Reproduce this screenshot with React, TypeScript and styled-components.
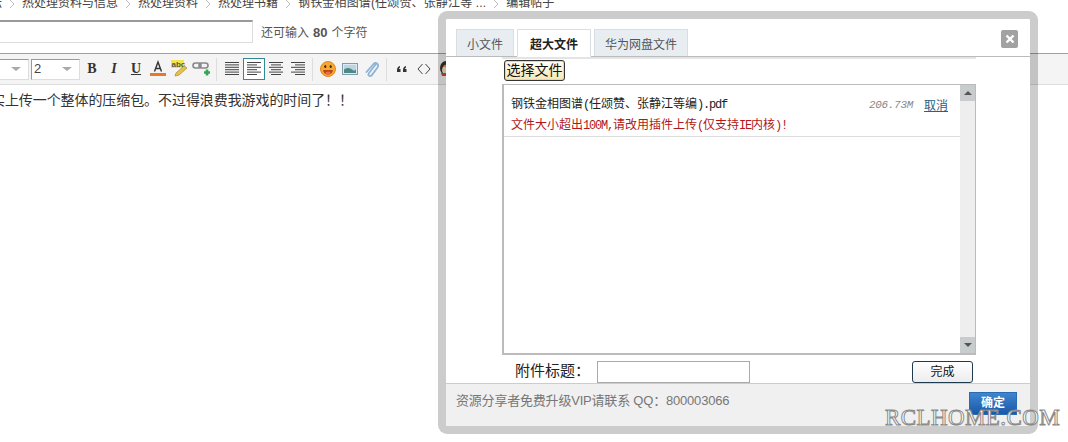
import styled, { createGlobalStyle } from "styled-components";

const cjk = `"Liberation Sans", "Noto Sans CJK SC", sans-serif`;

const GlobalStyle = createGlobalStyle`
  html, body {
    margin: 0;
    padding: 0;
    background: #fff;
    overflow: hidden;
  }
  body {
    height: 442px;
    font-family: ${cjk};
    font-size: 12px;
    color: #333;
  }
`;

const Page = styled.div`
  position: relative;
  width: 1068px;
  height: 442px;
  overflow: hidden;
`;

const Crumbs = styled.div`
  display: flex;
  align-items: flex-end;
  height: 11px;
  overflow: hidden;
  margin-left: -22px;
  gap: 7px;
  line-height: 16px;
  white-space: nowrap;
  color: #444;
`;

const Crumb = styled.span<{ $spaced?: boolean }>`
  display: block;
  flex: none;
  height: 16px;
  letter-spacing: ${(p) => (p.$spaced ? "0.15px" : "0")};
`;

const TitleRow = styled.div`
  display: flex;
  align-items: center;
  margin-top: 9px;
  height: 23px;
  gap: 8px;
`;

const TitleInput = styled.div`
  width: 253px;
  height: 23px;
  box-sizing: border-box;
  border: 1px solid #ddd;
  border-top: 2px solid #999;
  border-left: 0;
`;

const Hint = styled.span`
  color: #555;
  line-height: 23px;
  padding-top: 2px;
  b {
    font-size: 13px;
    margin: 0 4px;
  }
`;

const Toolbar = styled.div`
  display: flex;
  align-items: center;
  margin-top: 10px;
  height: 30px;
  background: #f4f4f4;
  border-top: 1px solid #a0a0a0;
  border-bottom: 1px solid #ddd;
`;

const Select = styled.div<{ $w: number; $flush?: boolean; $gap: number }>`
  width: ${(p) => p.$w}px;
  height: 21px;
  box-sizing: border-box;
  background: #fff;
  border: 1px solid #ddd;
  border-top-color: #999;
  border-left: ${(p) => (p.$flush ? "0" : "1px solid #999")};
  margin-right: ${(p) => p.$gap}px;
  font-size: 13px;
  line-height: 18px;
  padding: 0 7px 0 2px;
  color: #444;
  display: flex;
  align-items: center;
  justify-content: space-between;
`;

const Caret = styled.i`
  width: 0;
  height: 0;
  border-left: 5px solid transparent;
  border-right: 5px solid transparent;
  border-top: 4px solid #aaa;
`;

const ToolBtn = styled.div<{ $on?: boolean }>`
  width: 22px;
  height: 22px;
  flex: none;
  box-sizing: border-box;
  display: flex;
  align-items: center;
  justify-content: center;
  border: 1px solid ${(p) => (p.$on ? "#2f8a96" : "transparent")};
  background: ${(p) => (p.$on ? "#fff" : "transparent")};
  color: #333;
`;

const LetterBtn = styled(ToolBtn)<{ $italic?: boolean; $under?: boolean }>`
  font-family: "Liberation Serif", serif;
  font-size: 14px;
  font-weight: 700;
  font-style: ${(p) => (p.$italic ? "italic" : "normal")};
  text-decoration: ${(p) => (p.$under ? "underline" : "none")};
`;

const Sep = styled.div`
  width: 1px;
  height: 23px;
  background: #ddd;
  margin: 0 4px 0 3px;
  flex: none;
`;

const Editor = styled.div`
  margin-left: -9px;
  padding-top: 5px;
  font-size: 14px;
  line-height: 20px;
  letter-spacing: -0.08px;
  color: #333;
  white-space: nowrap;
`;

const Modal = styled.div`
  position: absolute;
  left: 438px;
  top: 11px;
  width: 600px;
  height: 423px;
  box-sizing: border-box;
  border: 8px solid rgba(0, 0, 0, 0.2);
  border-radius: 9px;
  background: #fff;
  background-clip: padding-box;
  display: flex;
  flex-direction: column;
`;

const TabBar = styled.div`
  display: flex;
  gap: 3px;
  align-items: flex-end;
  height: 38px;
  box-sizing: border-box;
  padding-left: 10px;
  border-bottom: 1px solid #bbb;
  position: relative;
`;

const Tab = styled.div<{ $on?: boolean }>`
  box-sizing: border-box;
  padding: 0 ${(p) => (p.$on ? "12px" : "10px")};
  display: flex;
  align-items: center;
  color: ${(p) => (p.$on ? "#222" : "#555")};
  font-weight: ${(p) => (p.$on ? 700 : 400)};
  background: ${(p) => (p.$on ? "#fff" : "#e8edf2")};
  border: 1px solid #d8dee4;
  border-bottom: ${(p) => (p.$on ? "1px solid #fff" : "0")};
  margin-bottom: ${(p) => (p.$on ? "-1px" : "0")};
  height: ${(p) => (p.$on ? "28px" : "27px")};
`;

const CloseBtn = styled.div`
  position: absolute;
  right: 12px;
  top: 11px;
  width: 17px;
  height: 18px;
  border-radius: 2px;
  background: #a2a2a2;
  display: flex;
  align-items: center;
  justify-content: center;
`;

const Body = styled.div`
  flex: 1;
  display: flex;
  flex-direction: column;
  padding-left: 56px;
  padding-right: 54px;
`;

const BodyTopRule = styled.div`
  height: 2px;
  background: #e4e4e4;
`;

const PickRow = styled.div`
  display: flex;
  padding: 1px 0 0 2px;
  height: 25px;
  box-sizing: border-box;
`;

const PickButton = styled.div`
  width: 61px;
  height: 21px;
  box-sizing: border-box;
  border: 1px solid #333;
  border-radius: 3px;
  background: linear-gradient(#fffdf5, #f6e6b8);
  box-shadow: inset 0 0 0 1px #f3d68e;
  font-size: 14px;
  line-height: 18px;
  text-align: center;
  color: #111;
`;

const ListBox = styled.div`
  display: flex;
  height: 271px;
  box-sizing: border-box;
  border: 1px solid #bbb;
  border-width: 1px 1px 2px 2px;
`;

const ListInner = styled.div`
  flex: 1;
  min-width: 0;
`;

const FileRow = styled.div`
  height: 52px;
  box-sizing: border-box;
  border-bottom: 1px solid #ddd;
  padding: 9px 0 0 7px;
  display: grid;
  grid-template-columns: 1fr auto auto;
  grid-template-rows: 21px 20px;
  align-items: center;
`;

const FileName = styled.span`
  color: #222;
  line-height: 20px;
`;

const Half = styled.span`
  font-family: "Liberation Mono", monospace;
  letter-spacing: -1.2px;
`;

const FileSize = styled.span`
  font-style: italic;
  font-size: 11px;
  color: #888;
  margin-right: 11px;
  font-family: "Liberation Mono", monospace;
  letter-spacing: -0.3px;
`;

const CancelLink = styled.a`
  color: #2a6080;
  text-decoration: underline;
  margin-right: 12px;
`;

const FileError = styled.span`
  grid-column: 1 / 4;
  color: #b01818;
  line-height: 20px;
`;

const Scrollbar = styled.div`
  width: 15px;
  flex: none;
  background: #eee;
  display: flex;
  flex-direction: column;
  justify-content: space-between;
`;

const ScrollArrow = styled.div<{ $down?: boolean }>`
  height: 16px;
  background: #c8cccc;
  display: flex;
  align-items: center;
  justify-content: center;
  &::after {
    content: "";
    border-left: 4px solid transparent;
    border-right: 4px solid transparent;
    ${(p) => (p.$down ? "border-top: 4px solid #555;" : "border-bottom: 4px solid #555;")}
  }
`;

const TitleField = styled.div`
  display: flex;
  align-items: center;
  height: 28px;
  padding: 6px 3px 0 13px;
  box-sizing: border-box;
`;

const FieldLabel = styled.label`
  font-size: 15px;
  line-height: 20px;
  padding-bottom: 3px;
  color: #222;
  width: 82px;
  flex: none;
`;

const FieldInput = styled.div`
  width: 153px;
  height: 22px;
  box-sizing: border-box;
  border: 1px solid #aaa;
`;

const DoneButton = styled.div`
  margin-left: auto;
  width: 61px;
  height: 22px;
  box-sizing: border-box;
  border: 1px solid #1e3a4e;
  border-radius: 3px;
  background: linear-gradient(#fff, #ececec);
  text-align: center;
  line-height: 20px;
  color: #111;
`;

const Footer = styled.div`
  height: 43px;
  box-sizing: border-box;
  background: #f0f0f0;
  border-top: 1px solid #ccc;
  padding: 8px 13px 0 10px;
  display: flex;
  justify-content: space-between;
  align-items: flex-start;
  color: #777;
  font-size: 13px;
  letter-spacing: -0.2px;
  line-height: 18px;
`;

const ConfirmButton = styled.div`
  width: 48px;
  height: 23px;
  background: linear-gradient(#3f86d0, #1a58a8);
  border: 1px solid #2a6cb4;
  box-sizing: border-box;
  color: #fff;
  font-size: 12px;
  font-weight: 700;
  letter-spacing: 0;
  text-align: center;
  line-height: 21px;
`;

const Watermark = styled.div`
  position: absolute;
  left: 885px;
  top: 406px;
  font-family: "Liberation Serif", serif;
  font-size: 23px;
  line-height: 24px;
  letter-spacing: 0.4px;
  color: #fff;
  -webkit-text-stroke: 1px #8a8a8a;
  white-space: nowrap;
`;

const Chevron = () => (
  <svg width="6" height="11" viewBox="0 0 6 11" fill="none" style={{ flex: "none" }}>
    <path d="M1 0l4 4-4 4" stroke="#bbb" />
  </svg>
);

const AlignIcon = ({ mode }: { mode: "j" | "l" | "c" | "r" }) => {
  const rows = [0, 1, 2, 3, 4, 5];
  const line = (i: number) => {
    const short = i % 2 === 1 ? 10 : 14;
    if (mode === "j") return [0, 14];
    if (mode === "l") return [0, short];
    if (mode === "c") return [(14 - short) / 2, short];
    return [14 - short, short];
  };
  return (
    <svg width="14" height="14" viewBox="0 0 14 14">
      {rows.map((i) => {
        const [x, w] = line(i);
        return <rect key={i} x={x} y={i * 2.4} width={w} height="1" fill="#444" />;
      })}
    </svg>
  );
};

const ColorIcon = () => (
  <svg width="18" height="18" viewBox="0 0 18 18">
    <path d="M5.500 11.500L9 2l3.500 9.500M6.800 8.500h4.400" fill="none" stroke="#333" strokeWidth="1.4" />
    <rect x="1" y="13" width="16" height="3" fill="#e8792a" />
  </svg>
);

const SpellIcon = () => (
  <svg width="18" height="18" viewBox="0 0 18 18">
    <rect x="0" y="0" width="13" height="8" fill="#f4e64a" />
    <text x="0.5" y="6.5" fontSize="8" fontWeight="700" fill="#555" fontFamily="Liberation Sans">abc</text>
    <path d="M4 16l1-3 8-7 3 2-8 7z" fill="#e8c24a" stroke="#a88828" strokeWidth="0.7" />
  </svg>
);

const LinkPlusIcon = () => (
  <svg width="20" height="18" viewBox="0 0 20 18">
    <rect x="1" y="3" width="8" height="5" rx="2.500" fill="none" stroke="#888" strokeWidth="1.6" />
    <rect x="7" y="3" width="9" height="5" rx="2.500" fill="none" stroke="#888" strokeWidth="1.6" />
    <path d="M12 12.500h6M15 9.500v6" stroke="#2fa84f" strokeWidth="2.6" />
  </svg>
);

const SmileIcon = () => (
  <svg width="18" height="18" viewBox="0 0 18 18">
    <circle cx="9" cy="9" r="7.500" fill="#f6a832" stroke="#e08a20" />
    <ellipse cx="6.300" cy="6.500" rx="1.100" ry="1.600" fill="#4a2a10" />
    <ellipse cx="11.700" cy="6.500" rx="1.100" ry="1.600" fill="#4a2a10" />
    <path d="M4 10h10c-.5 3-2.500 4.600-5 4.600S4.500 13 4 10z" fill="#b8481c" />
    <ellipse cx="9" cy="13" rx="2.600" ry="1.600" fill="#ee6a50" />
  </svg>
);

const ImageIcon = () => (
  <svg width="16" height="12" viewBox="0 0 16 12">
    <rect x="0.500" y="0.500" width="15" height="11" fill="#dfeaf2" stroke="#7d9db5" />
    <rect x="2" y="2" width="12" height="8" fill="#bcd4e4" />
    <path d="M2 6.500c3-2 5-2 8 0s2 1 4 0V10H2z" fill="#4f8a80" />
  </svg>
);

const ClipIcon = () => (
  <svg width="18" height="20" viewBox="0 0 18 20" fill="none">
    <path
      d="M13 5L6 14c-1.500 2 .5 4 2.500 2.500l6-8c2-3-1.500-6-4-3.500L3.500 13"
      stroke="#8fb2d6"
      strokeWidth="1.8"
      strokeLinecap="round"
    />
  </svg>
);

const QuoteIcon = () => (
  <svg width="12" height="10" viewBox="0 0 12 10">
    <path d="M1 6c0-2 1-3.500 3-4v1.500C3.200 4 3 4.500 3 5h1.500v3H1zM7 6c0-2 1-3.500 3-4v1.500C9.200 4 9 4.500 9 5h1.500v3H7z" fill="#333" />
  </svg>
);

const CodeIcon = () => (
  <svg width="14" height="12" viewBox="0 0 14 12" fill="none">
    <path d="M5.500 1L1 6l4.500 5M8.500 1L13 6l-4.500 5" stroke="#444" />
  </svg>
);

const QqIcon = () => (
  <svg width="16" height="18" viewBox="0 0 16 18">
    <ellipse cx="8" cy="8" rx="6" ry="7" fill="#3a3028" />
    <ellipse cx="8" cy="10" rx="4" ry="4.500" fill="#f2e4d0" />
    <path d="M3 13h10l-1 3H4z" fill="#d8452c" />
    <ellipse cx="8" cy="6" rx="2.500" ry="1.200" fill="#eea030" />
  </svg>
);

export default function App() {
  return (
    <Page>
      <GlobalStyle />
      <Crumbs>
        <Crumb>论坛</Crumb>
        <Chevron />
        <Crumb>热处理资料与信息</Crumb>
        <Chevron />
        <Crumb>热处理资料</Crumb>
        <Chevron />
        <Crumb>热处理书籍</Crumb>
        <Chevron />
        <Crumb $spaced>钢铁金相图谱(任颂赞、张静江等 ...</Crumb>
        <Chevron />
        <Crumb>编辑帖子</Crumb>
      </Crumbs>
      <TitleRow>
        <TitleInput />
        <Hint>
          还可输入<b>80</b>个字符
        </Hint>
      </TitleRow>
      <Toolbar>
        <Select $w={29} $gap={2} $flush>
          <span />
          <Caret />
        </Select>
        <Select $w={49} $gap={1}>
          <span>2</span>
          <Caret />
        </Select>
        <LetterBtn>B</LetterBtn>
        <LetterBtn $italic>I</LetterBtn>
        <LetterBtn $under>U</LetterBtn>
        <ToolBtn><ColorIcon /></ToolBtn>
        <ToolBtn><SpellIcon /></ToolBtn>
        <ToolBtn><LinkPlusIcon /></ToolBtn>
        <Sep />
        <ToolBtn><AlignIcon mode="j" /></ToolBtn>
        <ToolBtn $on><AlignIcon mode="l" /></ToolBtn>
        <ToolBtn><AlignIcon mode="c" /></ToolBtn>
        <ToolBtn><AlignIcon mode="r" /></ToolBtn>
        <Sep />
        <ToolBtn><SmileIcon /></ToolBtn>
        <ToolBtn><ImageIcon /></ToolBtn>
        <ToolBtn><ClipIcon /></ToolBtn>
        <Sep />
        <ToolBtn><QuoteIcon /></ToolBtn>
        <ToolBtn><CodeIcon /></ToolBtn>
        <ToolBtn><QqIcon /></ToolBtn>
      </Toolbar>
      <Editor>实上传一个整体的压缩包。不过得浪费我游戏的时间了！！</Editor>

      <Modal>
        <TabBar>
          <Tab>小文件</Tab>
          <Tab $on>超大文件</Tab>
          <Tab>华为网盘文件</Tab>
          <CloseBtn>
            <svg width="10" height="10" viewBox="0 0 10 10">
              <path d="M1.500 1.500l7 7M8.500 1.500l-7 7" stroke="#fff" strokeWidth="2.4" />
            </svg>
          </CloseBtn>
        </TabBar>
        <Body>
          <BodyTopRule />
          <PickRow>
            <PickButton>选择文件</PickButton>
          </PickRow>
          <ListBox>
            <ListInner>
              <FileRow>
                <FileName>
                  钢铁金相图谱<Half>(</Half>任颂赞、张静江等编<Half>).pdf</Half>
                </FileName>
                <FileSize>206.73M</FileSize>
                <CancelLink>取消</CancelLink>
                <FileError>
                  文件大小超出<Half>100M,</Half>请改用插件上传<Half>(</Half>仅支持<Half>IE</Half>内核<Half>)!</Half>
                </FileError>
              </FileRow>
            </ListInner>
            <Scrollbar>
              <ScrollArrow />
              <ScrollArrow $down />
            </Scrollbar>
          </ListBox>
          <TitleField>
            <FieldLabel>附件标题：</FieldLabel>
            <FieldInput />
            <DoneButton>完成</DoneButton>
          </TitleField>
        </Body>
        <Footer>
          <span>资源分享者免费升级VIP请联系 QQ：800003066</span>
          <ConfirmButton>确定</ConfirmButton>
        </Footer>
      </Modal>
      <Watermark>RCLHOME.COM</Watermark>
    </Page>
  );
}
